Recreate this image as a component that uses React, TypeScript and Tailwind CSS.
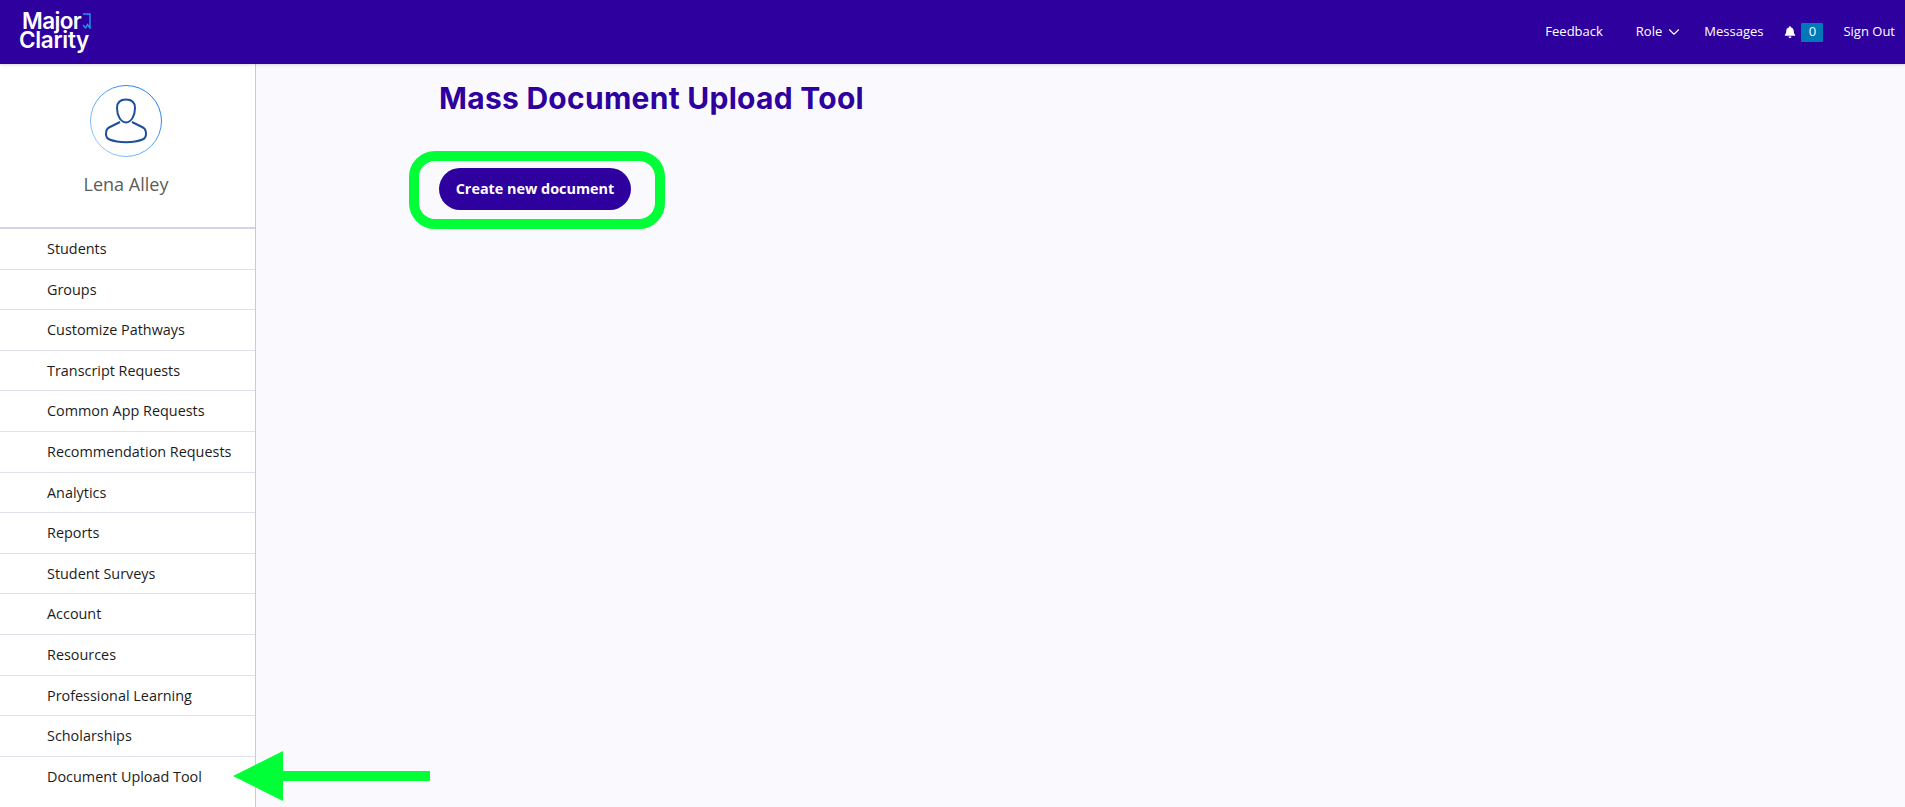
import { ChevronDown } from "lucide-react";
import { FaBell } from "react-icons/fa";

const NAV_ITEMS = [
  "Students",
  "Groups",
  "Customize Pathways",
  "Transcript Requests",
  "Common App Requests",
  "Recommendation Requests",
  "Analytics",
  "Reports",
  "Student Surveys",
  "Account",
  "Resources",
  "Professional Learning",
  "Scholarships",
  "Document Upload Tool",
];

const Header = () => (
  <header className="relative z-10 flex h-[64px] shrink-0 items-center justify-between bg-[#2e009e] pr-[10px] pl-[19px] shadow-[0_1px_3px_rgba(0,0,0,0.15)]">
    <div className="mb-[5px] flex flex-col items-start font-['Inter',sans-serif] text-[22.5px] leading-[19px] font-semibold tracking-[-0.3px] text-white">
      <div className="ml-[3px] flex items-start">
        <span className="tracking-[-0.6px]">Major</span>
        <svg className="mt-[2px] ml-[1px]" width="9" height="16" viewBox="0 0 9 16" fill="none">
          <path d="M1 1H8V15L5.5 11.5L3.5 15L1 12" stroke="#1d9bf0" strokeWidth="1.4" />
        </svg>
      </div>
      <span>Clarity</span>
    </div>
    <nav className="flex items-center text-[13px] text-white">
      <a>Feedback</a>
      <a className="ml-[33px] flex items-center">
        Role
        <ChevronDown className="ml-[2.5px]" size={18} strokeWidth={1.5} />
      </a>
      <a className="ml-[21.5px]">Messages</a>
      <FaBell className="ml-[21px]" size={12} />
      <span className="ml-[5px] flex h-[19px] w-[22px] items-center justify-center rounded-[1px] bg-[#0079b8] text-[13px]">
        0
      </span>
      <a className="ml-[20px]">Sign Out</a>
    </nav>
  </header>
);

const Avatar = () => (
  <svg width="72" height="72" viewBox="0 0 72 72" fill="none">
    <defs>
      <linearGradient id="ring" x1="1" y1="0" x2="0" y2="1">
        <stop offset="0" stopColor="#0a6fe8" />
        <stop offset="1" stopColor="#a5d2fb" />
      </linearGradient>
    </defs>
    <circle cx="36" cy="36" r="35.5" stroke="url(#ring)" />
    <g stroke="#1f4e9c" strokeWidth="2">
      <path d="M36 14.5C30 14.5 27 18 27 23C27 30 30.5 37.5 36 37.5C41.5 37.5 45 30 45 23C45 18 42 14.5 36 14.5Z" />
      <path d="M30 37L19 42.5C17 43.5 16 46 16 49C16 52 17 53.5 19.5 54.5C28 58 44 58 52.5 54.5C55 53.5 56 52 56 49C56 46 55 43.5 53 42.5L42 37" />
    </g>
  </svg>
);

const Sidebar = () => (
  <aside className="h-full w-[256px] shrink-0 border-r border-[#c9c7e3] bg-white">
    <div className="flex h-[165px] flex-col items-center border-b-2 border-[#d5d3e8] pt-[21px] pr-[3px]">
      <Avatar />
      <span className="mt-[15px] text-[18px] leading-[24px] text-[#5c5c5c]">Lena Alley</span>
    </div>
    <ul>
      {NAV_ITEMS.map((item) => (
        <li
          key={item}
          className="flex h-[40.6px] items-center border-b border-[#e1e0ee] pl-[47px] text-[14.4px] text-[#1c1c1c] last:border-b-0"
        >
          {item}
        </li>
      ))}
    </ul>
  </aside>
);

export default function App() {
  return (
    <div className="relative flex h-[807px] w-full flex-col overflow-hidden bg-[#fafafe] font-['Open_Sans',sans-serif]">
      <Header />
      <div className="flex min-h-0 flex-1">
        <Sidebar />
        <main className="pt-[16px] pl-[153px]">
          <h1 className="ml-[30px] font-['Inter',sans-serif] text-[30px] leading-[36px] font-bold tracking-[0.27px] text-[#2e009e]">
            Mass Document Upload Tool
          </h1>
          <div className="mt-[35px] inline-flex rounded-[26px] border-[10px] border-[#00ff37] pt-[7px] pr-[24px] pb-[9px] pl-[20px]">
            <button className="h-[42px] w-[192px] rounded-full bg-[#2e009e] text-[14.4px] font-bold text-white">
              Create new document
            </button>
          </div>
        </main>
      </div>
      <svg className="absolute top-[751px] left-[233px]" width="197" height="50" viewBox="0 0 197 50">
        <path d="M0 25L50 0V20H197V30H50V50Z" fill="#00ff37" />
      </svg>
    </div>
  );
}
